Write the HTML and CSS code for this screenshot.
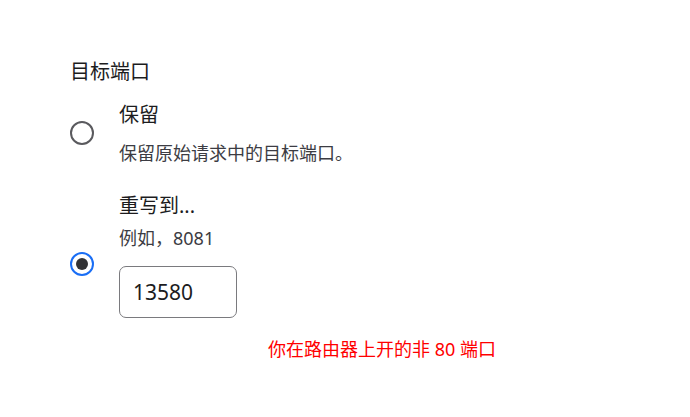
FILE: index.html
```html
<!DOCTYPE html>
<html>
<head>
	<title>目标端口</title>
	<link rel="stylesheet" href="styles.css">
</head>
<body>
	<div class="container">
		<h2 class="section-title">目标端口</h2>

		<label class="option">
			<span class="radio"></span>
			<span class="option-body">
				<span class="option-label">保留</span>
				<span class="option-hint first">保留原始请求中的目标端口。</span>
			</span>
		</label>

		<label class="option rewrite">
			<span class="radio checked"></span>
			<span class="option-body">
				<span class="option-label">重写到...</span>
				<span class="option-hint">例如，8081</span>
				<span class="port-input">13580</span>
			</span>
		</label>

		<p class="note">你在路由器上开的非 80 端口</p>
	</div>
</body>
</html>
```

FILE: styles.css
```css
body {
	background-color: #ffffff;
	font-family: "Noto Sans", "Noto Sans CJK SC", sans-serif;
	color: #1c1c1e;
	margin: 0;
	padding: 0;
}

.container {
	padding: 58px 0 0 70px;
}

.section-title {
	font-size: 20px;
	font-weight: normal;
	line-height: 28px;
	margin: 0 0 15px 0;
}

.option {
	display: flex;
	align-items: center;
	cursor: pointer;
}

.option-body {
	display: flex;
	flex-direction: column;
	align-items: flex-start;
}

.option-label {
	font-size: 20px;
	line-height: 28px;
}

.option-hint {
	font-size: 18px;
	line-height: 24px;
	color: #3c3c43;
	margin-top: 6px;
}

.option-hint.first {
	margin-top: 12px;
}

.rewrite {
	margin-top: 27px;
}

.rewrite .option-body {
	padding-bottom: 18px;
}

.radio {
	width: 20px;
	height: 20px;
	border: 2px solid #5a5a5e;
	border-radius: 50%;
	margin-right: 25px;
	position: relative;
	flex-shrink: 0;
}

.radio.checked {
	border-color: #1a6ef5;
}

.radio.checked::after {
	content: "";
	position: absolute;
	top: 4px;
	left: 4px;
	width: 12px;
	height: 12px;
	border-radius: 50%;
	background-color: #333335;
}

.port-input {
	margin-top: 16px;
	width: 103px;
	height: 50px;
	border: 1px solid #7a7a7e;
	border-radius: 7px;
	font-size: 21px;
	line-height: 50px;
	padding-left: 13px;
}

.note {
	margin: 1px 0 0 198px;
	font-size: 18px;
	line-height: 24px;
	color: #ff0000;
}
```
